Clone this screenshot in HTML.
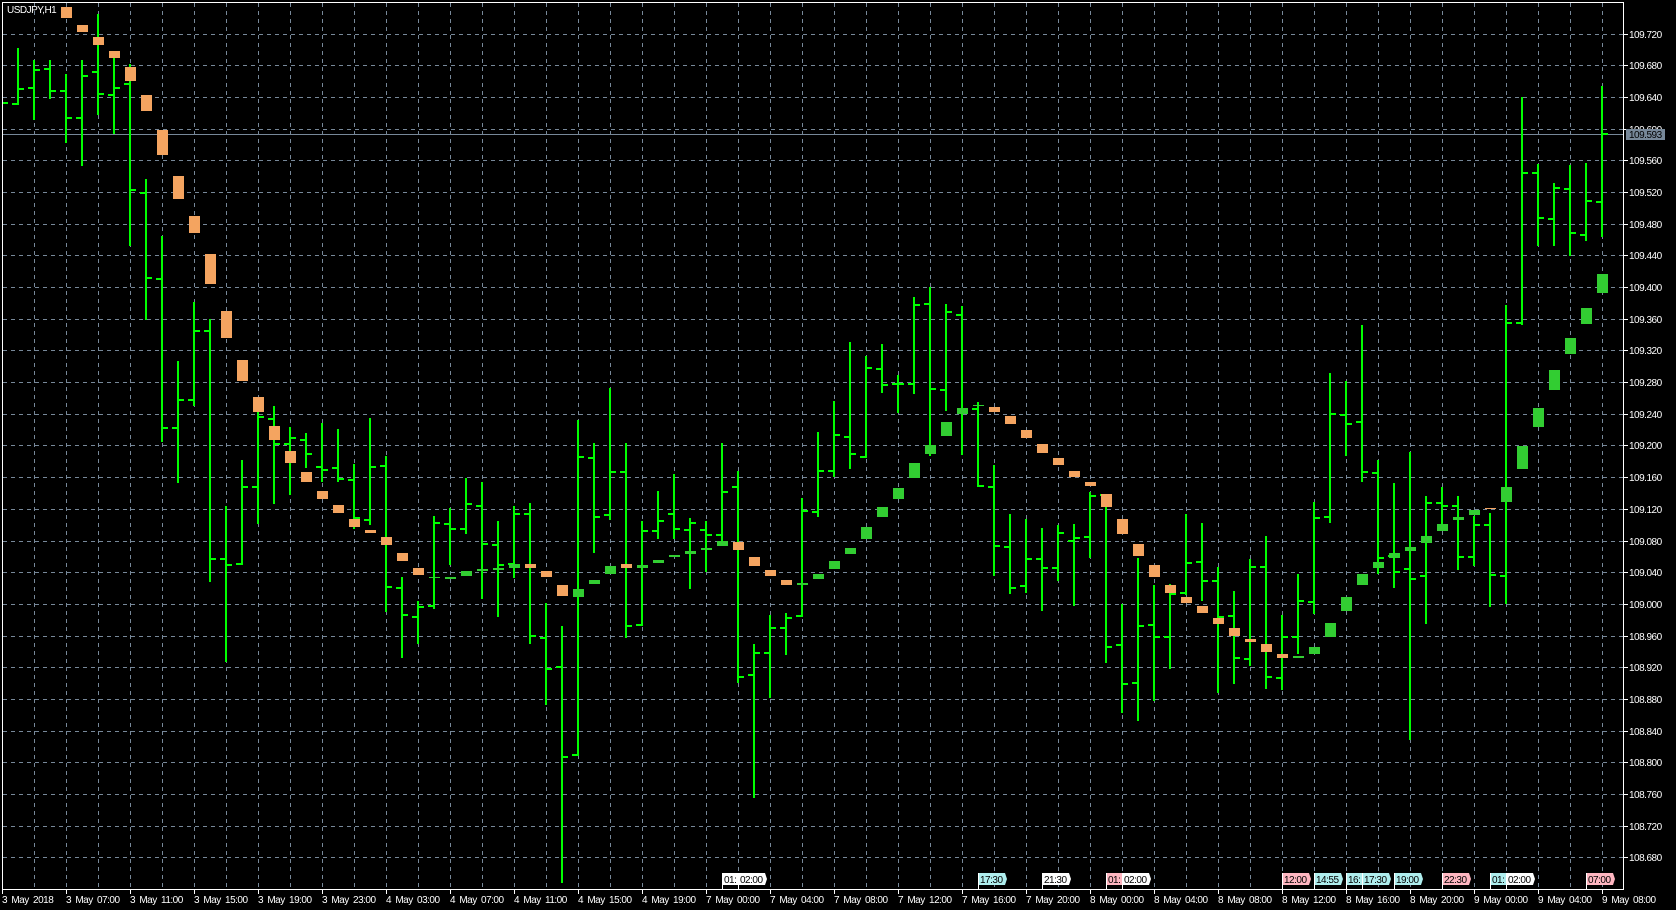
<!DOCTYPE html>
<html lang="en">
<head>
<meta charset="utf-8">
<title>USDJPY,H1</title>
<style>
html,body{margin:0;padding:0;background:#000;width:1676px;height:910px;overflow:hidden}
svg{display:block;position:absolute;left:0;top:0}
text{font-family:"Liberation Sans",sans-serif;font-size:10px;letter-spacing:-.5px}
.p text,text.p{fill:#fff}
.t text{fill:#fff;word-spacing:2px}
.f text{fill:#000}
</style>
</head>
<body>
<svg width="1676" height="910" viewBox="0 0 1676 910" xmlns="http://www.w3.org/2000/svg">
<rect width="1676" height="910" fill="#000"/>
<!-- grid -->
<path shape-rendering="crispEdges" fill="none" stroke="#778899" stroke-width="1" stroke-dasharray="4 4" d="M3 34.5H1623M3 65.5H1623M3 97.5H1623M3 129.5H1623M3 160.5H1623M3 192.5H1623M3 224.5H1623M3 255.5H1623M3 287.5H1623M3 319.5H1623M3 350.5H1623M3 382.5H1623M3 414.5H1623M3 445.5H1623M3 477.5H1623M3 509.5H1623M3 541.5H1623M3 572.5H1623M3 604.5H1623M3 636.5H1623M3 667.5H1623M3 699.5H1623M3 731.5H1623M3 762.5H1623M3 794.5H1623M3 826.5H1623M3 857.5H1623
M34.5 3V889M66.5 3V889M98.5 3V889M130.5 3V889M162.5 3V889M194.5 3V889M226.5 3V889M258.5 3V889M290.5 3V889M322.5 3V889M354.5 3V889M386.5 3V889M418.5 3V889M450.5 3V889M482.5 3V889M514.5 3V889M546.5 3V889M578.5 3V889M610.5 3V889M642.5 3V889M674.5 3V889M706.5 3V889M738.5 3V889M770.5 3V889M802.5 3V889M834.5 3V889M866.5 3V889M898.5 3V889M930.5 3V889M962.5 3V889M994.5 3V889M1026.5 3V889M1058.5 3V889M1090.5 3V889M1122.5 3V889M1154.5 3V889M1186.5 3V889M1218.5 3V889M1250.5 3V889M1282.5 3V889M1314.5 3V889M1346.5 3V889M1378.5 3V889M1410.5 3V889M1442.5 3V889M1474.5 3V889M1506.5 3V889M1538.5 3V889M1570.5 3V889M1602.5 3V889"/>
<!-- bid line -->
<path shape-rendering="crispEdges" stroke="#778899" stroke-width="1" d="M3 134.5H1623"/>
<!-- bars -->
<path shape-rendering="crispEdges" fill="none" stroke="#00ff00" stroke-width="2" d="M3 103H8
M18 48V105M12 104H17M19 89H24
M34 60V120M28 88H33M35 70H40
M50 60V99M44 69H49M51 91H56
M66 74V143M60 91H65M67 118H72
M82 60V166M76 118H81M83 76H88
M98 14V115M92 72H97M99 94H104
M114 56V134M108 95H113M115 88H120
M130 64V246M124 84H129M131 190H136
M146 179V320M140 193H145M147 278H152
M162 236V442M156 279H161M163 428H168
M178 361V483M172 428H177M179 400H184
M194 302V406M188 400H193M195 331H200
M210 319V582M204 331H209M211 559H216
M226 506V662M220 559H225M227 565H232
M242 460V565M236 564H241M243 487H248
M258 412V524M252 487H257M259 417H264
M274 406V504M268 419H273M275 444H280
M290 427V495M284 444H289M291 438H296
M306 433V468M300 440H305M307 454H312
M322 423V482M316 467H321M323 470H328
M338 429V482M332 468H337M339 479H344
M354 464V529M348 480H353M355 518H360
M370 418V525M364 520H369M371 467H376
M386 456V612M380 466H385M387 587H392
M402 577V658M396 588H401M403 615H408
M418 601V644M412 617H417M419 607H424
M434 516V609M428 606H433M435 523H440
M450 508V565M444 524H449M451 529H456
M466 478V534M460 529H465M467 504H472
M482 482V599M476 506H481M483 544H488
M498 521V617M492 545H497M499 565H504
M514 506V578M508 564H513M515 514H520
M530 503V644M524 514H529M531 636H536
M546 603V705M540 638H545M547 669H552
M562 626V883M556 667H561M563 757H568
M578 420V756M572 755H577M579 457H584
M594 443V553M588 458H593M595 517H600
M610 388V520M604 515H609M611 472H616
M626 443V638M620 472H625M627 626H632
M642 521V626M636 625H641M643 531H648
M658 491V539M652 531H657M659 521H664
M674 474V539M668 514H673M675 529H680
M690 518V589M684 530H689M691 523H696
M706 521V572M700 530H705M707 535H712
M722 443V543M716 535H721M723 492H728
M738 471V683M732 487H737M739 677H744
M754 644V798M748 675H753M755 653H760
M770 615V698M764 653H769M771 628H776
M786 613V655M780 628H785M787 618H792
M802 498V617M796 616H801M803 511H808
M818 432V517M812 512H817M819 471H824
M834 401V477M828 471H833M835 435H840
M850 342V469M844 437H849M851 454H856
M866 356V458M860 457H865M867 368H872
M882 344V393M876 369H881M883 385H888
M898 375V413M892 384H897M899 384H904
M914 297V394M908 384H913M915 305H920
M930 287V456M924 304H929M931 389H936
M946 304V411M940 390H945M947 312H952
M962 306V455M956 315H961M963 409H968
M978 402V487M972 409H977M979 486H984
M994 465V576M988 487H993M995 546H1000
M1010 514V594M1004 547H1009M1011 588H1016
M1026 519V593M1020 586H1025M1027 559H1032
M1042 528V611M1036 559H1041M1043 568H1048
M1058 525V581M1052 568H1057M1059 533H1064
M1074 524V606M1068 541H1073M1075 538H1080
M1090 492V558M1084 537H1089M1091 496H1096
M1106 494V663M1100 495H1105M1107 647H1112
M1122 604V713M1116 645H1121M1123 684H1128
M1138 558V721M1132 683H1137M1139 626H1144
M1154 585V701M1148 625H1153M1155 637H1160
M1170 584V669M1164 637H1169M1171 594H1176
M1186 514V595M1180 593H1185M1187 563H1192
M1202 523V601M1196 562H1201M1203 581H1208
M1218 567V693M1212 581H1217M1219 617H1224
M1234 591V684M1228 616H1233M1235 658H1240
M1250 559V666M1244 659H1249M1251 567H1256
M1266 536V689M1260 567H1265M1267 677H1272
M1282 615V690M1276 678H1281M1283 637H1288
M1298 574V654M1292 637H1297M1299 601H1304
M1314 502V614M1308 602H1313M1315 518H1320
M1330 373V523M1324 517H1329M1331 414H1336
M1346 381V456M1340 415H1345M1347 424H1352
M1362 325V482M1356 422H1361M1363 472H1368
M1378 460V574M1372 473H1377M1379 558H1384
M1394 483V588M1388 556H1393M1395 572H1400
M1410 452V740M1404 569H1409M1411 579H1416
M1426 496V624M1420 576H1425M1427 503H1432
M1442 487V530M1436 503H1441M1443 506H1448
M1458 496V570M1452 506H1457M1459 557H1464
M1474 516V566M1468 557H1473M1475 525H1480
M1490 513V607M1484 525H1489M1491 575H1496
M1506 305V604M1500 576H1505M1507 323H1512
M1522 97V325M1516 323H1521M1523 173H1528
M1538 164V246M1532 173H1537M1539 218H1544
M1554 183V246M1548 219H1553M1555 188H1560
M1570 165V256M1564 189H1569M1571 233H1576
M1586 163V241M1580 235H1585M1587 201H1592
M1602 86V237M1596 202H1601M1603 134H1608"/>
<!-- orange bodies -->
<path shape-rendering="crispEdges" fill="none" stroke="#F4A460" stroke-width="11" d="M66.5 7V18M82.5 25V32M98.5 37V45M114.5 51V58M130.5 67V81M146.5 95V111M162.5 130V155M178.5 176V199M194.5 216V233M210.5 254V284M226.5 311V338M242.5 360V381M258.5 397V412M274.5 426V440M290.5 451V463M306.5 472V482M322.5 491V499M338.5 505V513M354.5 519V527M370.5 530V533M386.5 537V545M402.5 553V561M418.5 568V575M530.5 564V568M546.5 571V577M562.5 585V596M626.5 564V568M738.5 542V550M754.5 557V566M770.5 570V576M786.5 580V585M994.5 407V412M1010.5 416V424M1026.5 430V438M1042.5 444V453M1058.5 458V465M1074.5 471V477M1090.5 482V486M1106.5 494V507M1122.5 519V534M1138.5 544V556M1154.5 565V577M1170.5 585V593M1186.5 597V603M1202.5 606V613M1218.5 618V624M1234.5 628V636M1250.5 639V642M1266.5 644V652M1282.5 654V658M1490.5 508V509"/>
<!-- green bodies -->
<path shape-rendering="crispEdges" fill="none" stroke="#32CD32" stroke-width="11" d="M434.5 577V578M450.5 577V579M466.5 571V576M482.5 569V571M498.5 568V570M514.5 564V568M578.5 589V597M594.5 580V584M610.5 566V574M642.5 565V568M658.5 560V563M674.5 555V557M690.5 551V554M706.5 548V550M722.5 541V546M802.5 583V585M818.5 574V579M834.5 561V569M850.5 548V554M866.5 527V539M882.5 507V517M898.5 488V499M914.5 463V478M930.5 445V454M946.5 422V436M962.5 408V414M978.5 405V406M1298.5 656V658M1314.5 647V654M1330.5 623V637M1346.5 597V611M1362.5 574V585M1378.5 562V568M1394.5 553V558M1410.5 547V551M1426.5 536V543M1442.5 524V531M1458.5 517V520M1474.5 510V515M1506.5 487V502M1522.5 446V469M1538.5 408V427M1554.5 370V390M1570.5 338V354M1586.5 308V324M1602.5 274V293"/>
<!-- frame and axis ticks -->
<path shape-rendering="crispEdges" fill="none" stroke="#fff" stroke-width="1" d="M2.5 2.5H1623.5V889.5H2.5Z
M1624 34.5H1628M1624 65.5H1628M1624 97.5H1628M1624 129.5H1628M1624 160.5H1628M1624 192.5H1628M1624 224.5H1628M1624 255.5H1628M1624 287.5H1628M1624 319.5H1628M1624 350.5H1628M1624 382.5H1628M1624 414.5H1628M1624 445.5H1628M1624 477.5H1628M1624 509.5H1628M1624 541.5H1628M1624 572.5H1628M1624 604.5H1628M1624 636.5H1628M1624 667.5H1628M1624 699.5H1628M1624 731.5H1628M1624 762.5H1628M1624 794.5H1628M1624 826.5H1628M1624 857.5H1628
M2.5 890V894M66.5 890V894M130.5 890V894M194.5 890V894M258.5 890V894M322.5 890V894M386.5 890V894M450.5 890V894M514.5 890V894M578.5 890V894M642.5 890V894M706.5 890V894M770.5 890V894M834.5 890V894M898.5 890V894M962.5 890V894M1026.5 890V894M1090.5 890V894M1154.5 890V894M1218.5 890V894M1282.5 890V894M1346.5 890V894M1410.5 890V894M1474.5 890V894M1538.5 890V894M1602.5 890V894"/>
<text class="p" x="7" y="13">USDJPY,H1</text>
<!-- price axis -->
<g class="p">
<text x="1629" y="38">109.720</text>
<text x="1629" y="69">109.680</text>
<text x="1629" y="101">109.640</text>
<text x="1629" y="133">109.600</text>
<text x="1629" y="164">109.560</text>
<text x="1629" y="196">109.520</text>
<text x="1629" y="228">109.480</text>
<text x="1629" y="259">109.440</text>
<text x="1629" y="291">109.400</text>
<text x="1629" y="323">109.360</text>
<text x="1629" y="354">109.320</text>
<text x="1629" y="386">109.280</text>
<text x="1629" y="418">109.240</text>
<text x="1629" y="449">109.200</text>
<text x="1629" y="481">109.160</text>
<text x="1629" y="513">109.120</text>
<text x="1629" y="545">109.080</text>
<text x="1629" y="576">109.040</text>
<text x="1629" y="608">109.000</text>
<text x="1629" y="640">108.960</text>
<text x="1629" y="671">108.920</text>
<text x="1629" y="703">108.880</text>
<text x="1629" y="735">108.840</text>
<text x="1629" y="766">108.800</text>
<text x="1629" y="798">108.760</text>
<text x="1629" y="830">108.720</text>
<text x="1629" y="861">108.680</text>
</g>
<rect x="1626" y="129" width="39" height="11" fill="#778899" shape-rendering="crispEdges"/>
<text x="1629" y="138" fill="#000">109.593</text>
<!-- time axis -->
<g class="t">
<text x="2" y="903">3 May 2018</text>
<text x="66" y="903">3 May 07:00</text>
<text x="130" y="903">3 May 11:00</text>
<text x="194" y="903">3 May 15:00</text>
<text x="258" y="903">3 May 19:00</text>
<text x="322" y="903">3 May 23:00</text>
<text x="386" y="903">4 May 03:00</text>
<text x="450" y="903">4 May 07:00</text>
<text x="514" y="903">4 May 11:00</text>
<text x="578" y="903">4 May 15:00</text>
<text x="642" y="903">4 May 19:00</text>
<text x="706" y="903">7 May 00:00</text>
<text x="770" y="903">7 May 04:00</text>
<text x="834" y="903">7 May 08:00</text>
<text x="898" y="903">7 May 12:00</text>
<text x="962" y="903">7 May 16:00</text>
<text x="1026" y="903">7 May 20:00</text>
<text x="1090" y="903">8 May 00:00</text>
<text x="1154" y="903">8 May 04:00</text>
<text x="1218" y="903">8 May 08:00</text>
<text x="1282" y="903">8 May 12:00</text>
<text x="1346" y="903">8 May 16:00</text>
<text x="1410" y="903">8 May 20:00</text>
<text x="1474" y="903">9 May 00:00</text>
<text x="1538" y="903">9 May 04:00</text>
<text x="1602" y="903">9 May 08:00</text>
</g>
<!-- event flags -->
<g class="f">
<polygon fill="#fff" points="722,873 738,873 738,885 722,885"/><path stroke="#fff" d="M722.5 873V889"/><text x="724" y="883">01:</text>
<polygon fill="#fff" points="738,873 765,873 767,879 765,885 738,885"/><path stroke="#fff" d="M738.5 873V889"/><text x="740" y="883">02:00</text>
<polygon fill="#AFEEEE" points="978,873 1005,873 1007,879 1005,885 978,885"/><path stroke="#fff" d="M978.5 873V889"/><text x="980" y="883">17:30</text>
<polygon fill="#fff" points="1042,873 1069,873 1071,879 1069,885 1042,885"/><path stroke="#fff" d="M1042.5 873V889"/><text x="1044" y="883">21:30</text>
<polygon fill="#FFB6C1" points="1106,873 1122,873 1122,885 1106,885"/><path stroke="#fff" d="M1106.5 873V889"/><text x="1108" y="883">01:</text>
<polygon fill="#fff" points="1122,873 1149,873 1151,879 1149,885 1122,885"/><path stroke="#fff" d="M1122.5 873V889"/><text x="1124" y="883">02:00</text>
<polygon fill="#FFB6C1" points="1282,873 1309,873 1311,879 1309,885 1282,885"/><path stroke="#fff" d="M1282.5 873V889"/><text x="1284" y="883">12:00</text>
<polygon fill="#AFEEEE" points="1314,873 1341,873 1343,879 1341,885 1314,885"/><path stroke="#fff" d="M1314.5 873V889"/><text x="1316" y="883">14:55</text>
<polygon fill="#AFEEEE" points="1346,873 1362,873 1362,885 1346,885"/><path stroke="#fff" d="M1346.5 873V889"/><text x="1348" y="883">16:</text>
<polygon fill="#AFEEEE" points="1362,873 1389,873 1391,879 1389,885 1362,885"/><path stroke="#fff" d="M1362.5 873V889"/><text x="1364" y="883">17:30</text>
<polygon fill="#AFEEEE" points="1394,873 1421,873 1423,879 1421,885 1394,885"/><path stroke="#fff" d="M1394.5 873V889"/><text x="1396" y="883">19:00</text>
<polygon fill="#FFB6C1" points="1442,873 1469,873 1471,879 1469,885 1442,885"/><path stroke="#fff" d="M1442.5 873V889"/><text x="1444" y="883">22:30</text>
<polygon fill="#AFEEEE" points="1490,873 1506,873 1506,885 1490,885"/><path stroke="#fff" d="M1490.5 873V889"/><text x="1492" y="883">01:</text>
<polygon fill="#fff" points="1506,873 1533,873 1535,879 1533,885 1506,885"/><path stroke="#fff" d="M1506.5 873V889"/><text x="1508" y="883">02:00</text>
<polygon fill="#FFB6C1" points="1586,873 1613,873 1615,879 1613,885 1586,885"/><path stroke="#fff" d="M1586.5 873V889"/><text x="1588" y="883">07:00</text>
</g>
</svg>
</body>
</html>
